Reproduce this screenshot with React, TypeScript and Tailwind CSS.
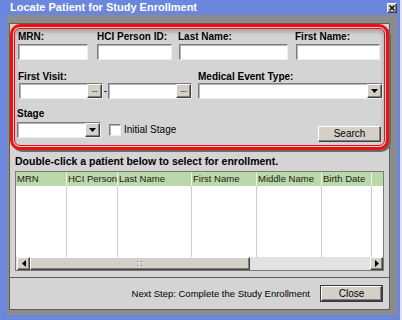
import React from "react";

const raised =
  "bg-[#d4d0c8] border border-t-white border-l-white border-b-[#404040] border-r-[#404040] shadow-[inset_-1px_-1px_0_#808080]";
const sunken =
  "bg-white border border-t-[#7c7c7c] border-l-[#7c7c7c] border-b-[#eeeeee] border-r-[#eeeeee] shadow-[inset_1px_1px_0_#b4b4b4]";
const label = "text-[10px] font-bold leading-[13px] h-[13px] whitespace-nowrap";

function DownArrow() {
  return (
    <svg width="7" height="4" viewBox="0 0 7 4">
      <path d="M0 0h7L3.5 4z" fill="#000" />
    </svg>
  );
}

function SideArrow({ dir }: { dir: "left" | "right" }) {
  return (
    <svg width="4" height="7" viewBox="0 0 4 7">
      <path d={dir === "left" ? "M4 0v7L0 3.5z" : "M0 0v7L4 3.5z"} fill="#000" />
    </svg>
  );
}

function TextBox({ w }: { w: string }) {
  return <div className={`${sunken} ${w} h-[16px]`} />;
}

function DateBox() {
  return (
    <div className={`${sunken} w-[84px] h-[16px] flex justify-end`}>
      <div className={`${raised} w-[15px] h-full flex items-start justify-center text-[9px] leading-[9px] tracking-[-0.5px]`}>
        ...
      </div>
    </div>
  );
}

function Combo({ w }: { w: string }) {
  return (
    <div className={`${sunken} ${w} h-[16px] flex justify-end`}>
      <div className={`${raised} w-[15px] h-full flex items-center justify-center`}>
        <DownArrow />
      </div>
    </div>
  );
}

const COLUMNS = [
  { name: "MRN", w: "w-[51px]" },
  { name: "HCI Person", w: "w-[51px]" },
  { name: "Last Name", w: "w-[74px]" },
  { name: "First Name", w: "w-[65px]" },
  { name: "Middle Name", w: "w-[65px]" },
  { name: "Birth Date", w: "w-[50px]" },
];

export default function App() {
  return (
    <div className="w-[402px] h-[320px] bg-[#dfe2ee] overflow-hidden font-['Liberation_Sans',Arial,sans-serif] text-black">
      <div className="w-[400px] h-[320px] bg-[#6b86dd] flex flex-col">
        {/* Title bar */}
        <div className="h-[15px] shrink-0 flex items-center justify-between pl-[10px] pr-[3px]">
          <span className="text-white font-bold text-[11px] leading-[15px]">Locate Patient for Study Enrollment</span>
          <div className={`${raised} w-[10px] h-[10px] flex items-center justify-center`}>
            <svg width="6" height="6" viewBox="0 0 6 6">
              <path d="M0.5 0.5L5.5 5.5M5.5 0.5L0.5 5.5" stroke="#000" strokeWidth="1.3" />
            </svg>
          </div>
        </div>

        {/* Frame */}
        <div className="flex-1 ml-[7px] mr-[3px] mb-[5px] bg-[#8c8c8c] pt-[8px] pl-[2px] pr-[7px] pb-[5px] flex">
          <div className="flex-1 bg-[#d4d4d4] border border-[#5e5e5e] flex flex-col">
            {/* Search criteria group */}
            <div className="h-[126px] shrink-0 rounded-[10px] border-[3px] border-[#ee1111] bg-[#ffc4c4] p-[1px] shadow-[2px_2px_0_#6a6a6a]">
              <div className="h-full rounded-[6px] border border-[#e0141a] bg-[#d4d4d4] shadow-[inset_0_3px_4px_rgba(0,0,0,0.22)] pl-[3px] pt-[1px] pr-[1px]">
                {/* Row 1 */}
                <div className="flex">
                  <div className="w-[70px]">
                    <div className={label}>MRN:</div>
                    <div className="mt-[1px]"><TextBox w="w-[70px]" /></div>
                  </div>
                  <div className="w-[75px] ml-[9px]">
                    <div className={label}>HCI Person ID:</div>
                    <div className="mt-[1px]"><TextBox w="w-[75px]" /></div>
                  </div>
                  <div className="w-[109px] ml-[7px]">
                    <div className={`${label} -ml-px`}>Last Name:</div>
                    <div className="mt-[1px]"><TextBox w="w-[109px]" /></div>
                  </div>
                  <div className="w-[84px] ml-[8px]">
                    <div className={`${label} -ml-px`}>First Name:</div>
                    <div className="mt-[1px]"><TextBox w="w-[84px]" /></div>
                  </div>
                </div>

                {/* Row 2 */}
                <div className="flex mt-[10px]">
                  <div className="w-[174px]">
                    <div className={label}>First Visit:</div>
                    <div className="flex items-center pl-[1px]">
                      <DateBox />
                      <span className="w-[5px] text-center text-[10px] leading-[10px]">-</span>
                      <DateBox />
                    </div>
                  </div>
                  <div className="ml-[6px]">
                    <div className={label}>Medical Event Type:</div>
                    <Combo w="w-[185px]" />
                  </div>
                </div>

                {/* Row 3 */}
                <div className="flex mt-[8px] -ml-px">
                  <div>
                    <div className={label}>Stage</div>
                    <div className="flex items-center mt-[2px]">
                      <Combo w="w-[84px]" />
                      <div className={`${sunken} w-[12px] h-[12px] ml-[8px]`} />
                      <span className="ml-[3px] text-[10px] leading-[12px]">Initial Stage</span>
                    </div>
                  </div>
                  <button
                    className={`${raised} ml-auto mr-[2px] mt-[19px] w-[63px] h-[16px] text-[10px] leading-[12px] flex items-center justify-center`}
                  >
                    Search
                  </button>
                </div>
              </div>
            </div>

            {/* Patient list */}
            <div className="mt-[5px] pl-[5px] text-[10.5px] font-bold leading-[12px] h-[12px] whitespace-nowrap">
              Double-click a patient below to select for enrollment.
            </div>
            <div className="mt-[4px] ml-[5px] w-[369px] h-[100px] shrink-0 border border-[#7a7a7a] bg-white flex flex-col">
              <div className="h-[14px] flex bg-[#bad8a8]">
                {COLUMNS.map((c) => (
                  <div
                    key={c.name}
                    className={`${c.w} h-full border-r border-[#edf3e8] pl-[1px] text-[9.5px] leading-[14px] whitespace-nowrap overflow-hidden text-[#1a1a1a]`}
                  >
                    {c.name}
                  </div>
                ))}
                <div className="flex-1" />
              </div>
              <div className="flex-1 flex">
                {COLUMNS.map((c) => (
                  <div key={c.name} className={`${c.w} h-full border-r border-[#cccccc]`} />
                ))}
                <div className="flex-1" />
              </div>
              <div className="h-[13px] flex bg-[#e2e2e2] pl-[1px]">
                <div className={`${raised} w-[13px] h-full flex items-center justify-center`}>
                  <SideArrow dir="left" />
                </div>
                <div className={`${raised} w-[220px] h-full flex items-center justify-center`}>
                  <svg width="6" height="6" viewBox="0 0 6 6">
                    <rect x="0" y="0" width="1" height="1" fill="#808080" />
                    <rect x="4" y="0" width="1" height="1" fill="#808080" />
                    <rect x="0" y="4" width="1" height="1" fill="#808080" />
                    <rect x="4" y="4" width="1" height="1" fill="#808080" />
                    <rect x="1" y="1" width="1" height="1" fill="#ffffff" />
                    <rect x="5" y="1" width="1" height="1" fill="#ffffff" />
                    <rect x="1" y="5" width="1" height="1" fill="#ffffff" />
                    <rect x="5" y="5" width="1" height="1" fill="#ffffff" />
                  </svg>
                </div>
                <div className="flex-1" />
                <div className={`${raised} w-[13px] h-full flex items-center justify-center`}>
                  <SideArrow dir="right" />
                </div>
              </div>
            </div>

            {/* Footer */}
            <div className="mt-[6px] flex-1 border-t border-[#5e5e5e] flex items-center justify-end pr-[6px]">
              <span className="text-[9.5px] leading-[12px] whitespace-nowrap">Next Step: Complete the Study Enrollment</span>
              <button className="ml-[10px] w-[63px] h-[17px] border border-[#3a3a3a] flex">
                <span className={`${raised} flex-1 h-full flex items-center justify-center text-[10px] leading-[12px]`}>Close</span>
              </button>
            </div>
          </div>
        </div>
      </div>
    </div>
  );
}
